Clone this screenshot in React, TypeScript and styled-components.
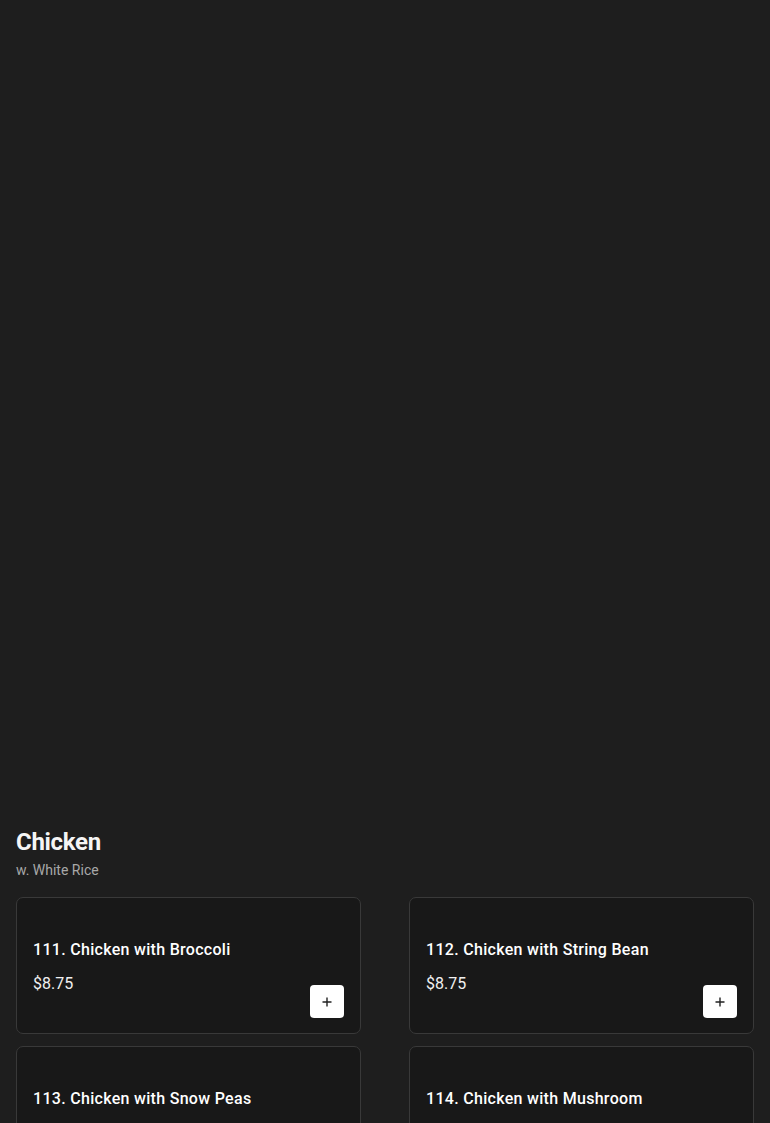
import React from 'react';
import styled, { createGlobalStyle } from 'styled-components';

const GlobalStyle = createGlobalStyle`
  html, body {
    margin: 0;
    padding: 0;
    background: #1e1e1e;
    font-family: Roboto, "Liberation Sans", sans-serif;
    color: #f2f2f2;
  }
`;

const Page = styled.div`
  min-height: 1123px;
  background: #1e1e1e;
`;

const Hero = styled.div`
  height: 826px;
`;

const Section = styled.section`
  padding: 0 16px;
`;

const Heading = styled.h2`
  margin: 0;
  font-size: 24px;
  line-height: 32px;
  font-weight: 700;
  letter-spacing: -0.3px;
  color: #f5f5f5;
`;

const Sub = styled.p`
  margin: 2px 0 17px;
  font-size: 14px;
  line-height: 20px;
  color: #a8a8a8;
`;

const Grid = styled.div`
  display: grid;
  grid-template-columns: 1fr 1fr;
  column-gap: 48px;
  row-gap: 12px;
`;

const Card = styled.div`
  display: flex;
  flex-direction: column;
  box-sizing: border-box;
  padding: 16px 16px 15px;
  background: #181818;
  border: 1px solid #393939;
  border-radius: 7px;
`;

const Name = styled.div`
  margin-top: 24px;
  font-size: 16px;
  line-height: 24px;
  font-weight: 500;
  letter-spacing: 0.3px;
  color: #ffffff;
`;

const Bottom = styled.div`
  display: flex;
  justify-content: space-between;
  align-items: flex-start;
  margin-top: 10px;
`;

const Price = styled.div`
  font-size: 16px;
  line-height: 24px;
  color: #f0f0f0;
`;

const AddButton = styled.button`
  display: flex;
  align-items: center;
  justify-content: center;
  width: 34px;
  height: 33px;
  margin-top: 13px;
  padding: 0;
  border: none;
  border-radius: 4px;
  background: #ffffff;
  color: #222;
  cursor: pointer;
`;

const items = [
  { name: '111. Chicken with Broccoli', price: '$8.75' },
  { name: '112. Chicken with String Bean', price: '$8.75' },
  { name: '113. Chicken with Snow Peas', price: '$8.75' },
  { name: '114. Chicken with Mushroom', price: '$8.75' },
];

const Plus = () => (
  <svg width="12" height="12" viewBox="0 0 12 12" fill="none" stroke="currentColor" strokeWidth="1.4">
    <path d="M6 1.5v9M1.5 6h9" />
  </svg>
);

const App = () => (
  <Page>
    <GlobalStyle />
    <Hero />
    <Section>
      <Heading>Chicken</Heading>
      <Sub>w. White Rice</Sub>
      <Grid>
        {items.map((item) => (
          <Card key={item.name}>
            <Name>{item.name}</Name>
            <Bottom>
              <Price>{item.price}</Price>
              <AddButton aria-label="Add">
                <Plus />
              </AddButton>
            </Bottom>
          </Card>
        ))}
      </Grid>
    </Section>
  </Page>
);

export default App;
